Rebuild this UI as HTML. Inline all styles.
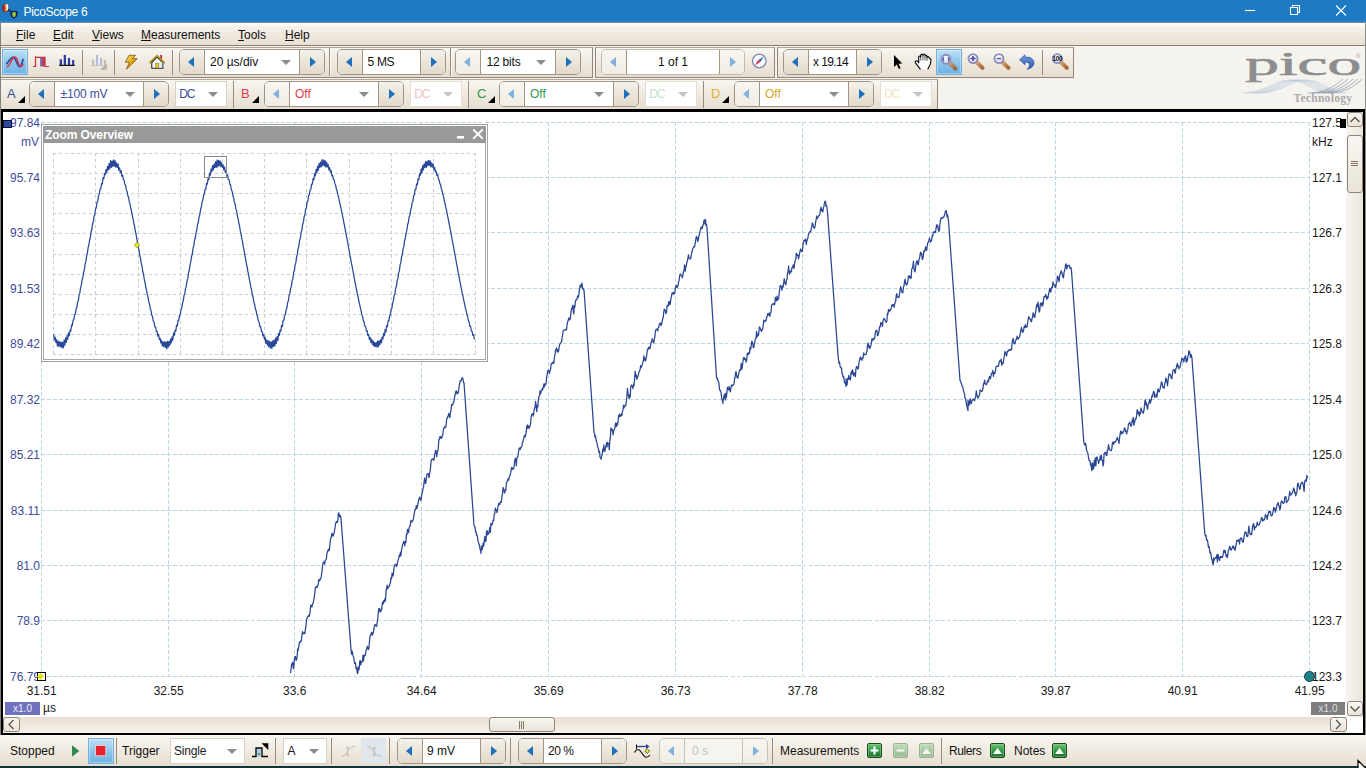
<!DOCTYPE html>
<html lang="en">
<head>
<meta charset="utf-8">
<title>PicoScope 6</title>
<style>
html,body{margin:0;padding:0;overflow:hidden;}
body{width:1366px;height:768px;overflow:hidden;position:relative;background:#ece7dc;
  font-family:"Liberation Sans","DejaVu Sans",sans-serif;font-size:12px;color:#1a1a1a;}
.abs{position:absolute;}
#title{left:0;top:0;width:1366px;height:23px;background:linear-gradient(#1d7ac3 0,#1d7ac3 21px,#5a86ab 22px,#7d909e 23px);}
#title .t{left:23.500px;top:4.600px;color:#fff;font-size:12px;letter-spacing:-.33px;white-space:nowrap;}
#menu{left:0;top:23px;width:1366px;height:22px;background:linear-gradient(#ffffff,#f5f2eb 18%,#efe9df 55%,#e8e0d2);border-bottom:1px solid #8d7d70;}
#menu span{position:absolute;top:5px;font-size:12px;white-space:nowrap;color:#111;}
#menu u{text-decoration:underline;text-underline-offset:1px;}
#tb1{left:0;top:46px;width:1366px;height:32px;background:#f5f3ee;}
#tb2{left:0;top:78px;width:1366px;height:32px;background:#f5f3ee;}
.tbg{position:absolute;top:1px;height:29px;background:linear-gradient(#f8f6f1,#f0ebe1 45%,#e5ddcf);border:1px solid #94857a;border-top-color:#b3a598;box-sizing:content-box;}
.tbg2{position:absolute;top:1px;height:30px;background:linear-gradient(#f8f6f1,#f0ebe1 45%,#e5ddcf);border-top:1px solid #b5a89c;border-right:1px solid #94857a;box-sizing:content-box;}
.sep{position:absolute;width:1px;background:#9a8b7d;}
/* spinner */
.spin{position:absolute;height:24px;border:1px solid #a39586;border-radius:5px;background:#fff;overflow:hidden;box-sizing:content-box;}
.spin .b{position:absolute;top:0;height:24px;width:24px;background:linear-gradient(#f5f2eb,#ebe5d9 50%,#e2dacb);}
.spin .b.l{left:0;border-right:1px solid #a39586;}
.spin .b.r{right:0;border-left:1px solid #a39586;}
.spin .b.dis{background:linear-gradient(#f8f6f1,#f1ede4);}
.spin .txt{position:absolute;top:5px;font-size:12px;white-space:nowrap;}
.tri-l{position:absolute;width:0;height:0;border-top:5px solid transparent;border-bottom:5px solid transparent;border-right:6px solid #1e6fbe;}
.tri-r{position:absolute;width:0;height:0;border-top:5px solid transparent;border-bottom:5px solid transparent;border-left:6px solid #1e6fbe;}
.tri-l.d{border-right-color:#7fb2dc;}
.tri-r.d{border-left-color:#7fb2dc;}
.tri-d{position:absolute;width:0;height:0;border-left:5px solid transparent;border-right:5px solid transparent;border-top:5px solid #8c8c8c;}
.tri-d.d{border-top-color:#c4c4c4;}
.dd{position:absolute;height:24px;border:1px solid #d8d1c6;background:#fff;box-sizing:content-box;}
.dd .txt{position:absolute;top:5px;font-size:12px;white-space:nowrap;}
.chl{position:absolute;font-size:13px;top:8px;}
.chtri{position:absolute;width:0;height:0;border-left:7px solid transparent;border-bottom:7px solid #000;}
/* plot */
#plot{left:1px;top:109px;width:1364px;height:626px;background:#000;}
#plotin{left:2px;top:3px;width:1360px;height:621px;background:#fff;}
.yl{margin-top:.7px;position:absolute;font-size:12px;color:#3e4c99;white-space:nowrap;text-align:right;width:40px;left:0;}
.yr{margin-top:.7px;position:absolute;font-size:12px;color:#1a1a1a;white-space:nowrap;left:1312px;}
.xl{position:absolute;font-size:12px;color:#1a1a1a;white-space:nowrap;width:60px;text-align:center;top:683.500px;margin-left:.7px;}
#bt{left:0;top:735px;width:1366px;height:31px;background:linear-gradient(#f8f6f1,#f1ece2 45%,#e6dfd1);}
#btm{left:0;top:766px;width:1366px;height:2px;background:#14323c;}
.sb{background:linear-gradient(#f8f6f1,#ebe5d8);border:1px solid #8f857b;border-radius:3px;box-sizing:content-box;}
.selb{background:linear-gradient(#bfe0f7,#8fc6ec 50%,#6db2e4);border:1px solid #74aedd;box-shadow:inset 0 0 0 1px rgba(255,255,255,.35);box-sizing:content-box;}
.bl2{position:absolute;top:9px;font-size:12px;white-space:nowrap;color:#111;}
.spin.disab{background:#f6f4ef;border-color:#c9c0b4}
.spin.disab .b{border-color:#c9c0b4}
.bl{position:absolute;top:745px;font-size:12px;white-space:nowrap;color:#111;}
</style>
</head>
<body>
<!-- title bar -->
<div id="title" class="abs"><span class="abs t">PicoScope 6</span></div>
<!-- menu -->
<div id="menu" class="abs">
<span style="left:16px"><u>F</u>ile</span>
<span style="left:53px"><u>E</u>dit</span>
<span style="left:92px"><u>V</u>iews</span>
<span style="left:141px"><u>M</u>easurements</span>
<span style="left:238px"><u>T</u>ools</span>
<span style="left:285px"><u>H</u>elp</span>
</div>
<!-- toolbar row 1 -->
<div id="tb1" class="abs">
<div class="tbg" style="left:-1px;width:592px"></div>
<div class="tbg" style="left:595px;width:178px"></div>
<div class="tbg" style="left:777px;width:295px"></div>
<div class="abs selb" style="left:2px;top:3px;width:24px;height:24px"></div>
<div class="abs selb" style="left:936px;top:3px;width:24px;height:24px"></div>
<div class="sep" style="left:82px;top:4px;height:25px"></div>
<div class="sep" style="left:114px;top:4px;height:25px"></div>
<div class="sep" style="left:172px;top:4px;height:25px"></div>
<div class="sep" style="left:1042px;top:4px;height:25px"></div>
<div class="sep" style="left:329px;top:2px;height:28px"></div><div class="sep" style="left:330px;top:2px;height:28px;background:#fbf9f5"></div>
<div class="sep" style="left:450px;top:2px;height:28px"></div><div class="sep" style="left:451px;top:2px;height:28px;background:#fbf9f5"></div>
<div class="spin" style="left:179px;top:3px;width:144px"><div class="b l" style="width:24px"><i class="tri-l" style="left:8px;top:7px"></i></div><div class="b r" style="width:24px"><i class="tri-r" style="left:10px;top:7px"></i></div><span class="txt" style="left:30px;color:#111">20 µs/div</span><i class="tri-d" style="left:100.500px;top:10px"></i></div>
<div class="spin" style="left:337px;top:3px;width:107px"><div class="b l" style="width:24px"><i class="tri-l" style="left:8px;top:7px"></i></div><div class="b r" style="width:24px"><i class="tri-r" style="left:10px;top:7px"></i></div><span class="txt" style="left:29.500px;color:#111;letter-spacing:-.3px">5 MS</span></div>
<div class="spin" style="left:455px;top:3px;width:124px"><div class="b l dis" style="width:24px"><i class="tri-l d" style="left:8px;top:7px"></i></div><div class="b r" style="width:24px"><i class="tri-r" style="left:10px;top:7px"></i></div><span class="txt" style="left:30.500px;color:#111;letter-spacing:-.2px">12 bits</span><i class="tri-d" style="left:80px;top:10px"></i></div>
<div class="spin" style="left:601px;top:3px;width:142px;border-color:#c4b9ad"><div class="b l dis" style="width:24px"><i class="tri-l d" style="left:8px;top:7px"></i></div><div class="b r dis" style="width:24px"><i class="tri-r d" style="left:10px;top:7px"></i></div><span class="txt" style="left:25px;right:25px;text-align:center;color:#111">1 of 1</span></div>
<div class="spin" style="left:783px;top:3px;width:97px"><div class="b l" style="width:24px"><i class="tri-l" style="left:8px;top:7px"></i></div><div class="b r" style="width:24px"><i class="tri-r" style="left:10px;top:7px"></i></div><span class="txt" style="left:29px;color:#111;letter-spacing:-.6px">x 19.14</span></div>

</div>
<!-- toolbar row 2 -->
<div id="tb2" class="abs">
<div class="tbg2" style="left:0;width:937px"></div>
<span class="chl" style="left:7px;color:#3e4c99">A</span><i class="chtri" style="left:18px;top:18px"></i>
<div class="spin" style="left:29px;top:3px;width:138px"><div class="b l" style="width:24px"><i class="tri-l" style="left:8px;top:7px"></i></div><div class="b r" style="width:24px"><i class="tri-r" style="left:10px;top:7px"></i></div><span class="txt" style="left:30.500px;color:#3e4c99;letter-spacing:-.15px">±100 mV</span><i class="tri-d" style="left:94.500px;top:10px"></i></div>
<div class="dd" style="left:175px;top:3px;width:50px"><span class="txt" style="left:3.300px;letter-spacing:-1.300px;color:#3e4c99">DC</span><i class="tri-d" style="left:32px;top:10px"></i></div>
<div class="sep" style="left:233px;top:3px;height:27px"></div>
<span class="chl" style="left:241px;color:#e03a4a">B</span><i class="chtri" style="left:252px;top:18px"></i>
<div class="spin" style="left:264px;top:3px;width:138px"><div class="b l dis" style="width:24px"><i class="tri-l d" style="left:8px;top:7px"></i></div><div class="b r" style="width:24px"><i class="tri-r" style="left:10px;top:7px"></i></div><span class="txt" style="left:30px;color:#e03a4a">Off</span><i class="tri-d" style="left:94px;top:10px"></i></div>
<div class="dd" style="left:410px;top:3px;width:50px;border-color:#e3ddd3"><span class="txt" style="left:3.300px;letter-spacing:-1.300px;color:#f3c2c8">DC</span><i class="tri-d d" style="left:32px;top:10px"></i></div>
<div class="sep" style="left:468px;top:3px;height:27px"></div>
<span class="chl" style="left:477px;color:#2e9a4e">C</span><i class="chtri" style="left:488px;top:18px"></i>
<div class="spin" style="left:499px;top:3px;width:138px"><div class="b l dis" style="width:24px"><i class="tri-l d" style="left:8px;top:7px"></i></div><div class="b r" style="width:24px"><i class="tri-r" style="left:10px;top:7px"></i></div><span class="txt" style="left:30px;color:#2e9a4e">Off</span><i class="tri-d" style="left:94px;top:10px"></i></div>
<div class="dd" style="left:645px;top:3px;width:50px;border-color:#e3ddd3"><span class="txt" style="left:3.300px;letter-spacing:-1.300px;color:#c4e3cd">DC</span><i class="tri-d d" style="left:32px;top:10px"></i></div>
<div class="sep" style="left:703px;top:3px;height:27px"></div>
<span class="chl" style="left:711px;color:#e0b030">D</span><i class="chtri" style="left:722px;top:18px"></i>
<div class="spin" style="left:734px;top:3px;width:138px"><div class="b l dis" style="width:24px"><i class="tri-l d" style="left:8px;top:7px"></i></div><div class="b r" style="width:24px"><i class="tri-r" style="left:10px;top:7px"></i></div><span class="txt" style="left:30px;color:#d8a82a">Off</span><i class="tri-d" style="left:94px;top:10px"></i></div>
<div class="dd" style="left:880px;top:3px;width:50px;border-color:#e3ddd3"><span class="txt" style="left:3.300px;letter-spacing:-1.300px;color:#f1e3bd">DC</span><i class="tri-d d" style="left:32px;top:10px"></i></div>

</div>
<!-- toolbar icons -->
<svg class="abs" style="left:0;top:0;pointer-events:none" width="1366" height="112" viewBox="0 0 1366 112">
<defs>
<linearGradient id="sqg" x1="0" x2="1" y1="0" y2="0"><stop offset="0" stop-color="#5b8fd8"/><stop offset=".45" stop-color="#b04a78"/><stop offset="1" stop-color="#c8283a"/></linearGradient>
<linearGradient id="blt" x1="0" x2="1" y1="0" y2="1"><stop offset="0" stop-color="#ffe680"/><stop offset=".5" stop-color="#e6a818"/><stop offset="1" stop-color="#9a6408"/></linearGradient>
<linearGradient id="hdl" x1="0" x2="1" y1="0" y2="1"><stop offset="0" stop-color="#e8a56a"/><stop offset="1" stop-color="#a8602c"/></linearGradient>
<radialGradient id="lens" cx=".4" cy=".35" r=".7"><stop offset="0" stop-color="#ffffff"/><stop offset="1" stop-color="#d5e2f5"/></radialGradient>
<linearGradient id="undo" x1="0" x2="0" y1="0" y2="1"><stop offset="0" stop-color="#6f9be0"/><stop offset="1" stop-color="#2a55b0"/></linearGradient>
<g id="mag">
<path d="M3.400 3.400L9.600 9.400" stroke="#8a5428" stroke-width="4" stroke-linecap="round" opacity=".55"/>
<path d="M3.400 3.400L9.400 9.200" stroke="url(#hdl)" stroke-width="3" stroke-linecap="round"/>
<circle cx="0" cy="0" r="4.500" fill="url(#lens)" stroke="#8a8fbc" stroke-width="1.900"/>
</g>
</defs>
<!-- sine -->
<path d="M6.800 63.500C9 62 10.500 57.300 13 57.300C16.300 57.300 16.800 66.800 19.800 66.800C21.600 66.800 22.200 62.500 23 59.500" fill="none" stroke="#2e4f9e" stroke-width="1.800" stroke-linecap="round"/>
<path d="M7.200 66.800C10 66.800 11.800 57 14.800 57C17.800 57 18 66.300 20.800 66.300C21.800 66.300 22.400 65.800 22.900 65" fill="none" stroke="#e03048" stroke-width="1.500" stroke-linecap="round"/>
<!-- square wave -->
<rect x="40" y="57.500" width="5" height="9" fill="url(#sqg)"/>
<path d="M33 66.500H35.500V56.300M35.500 57.300H45V66.500H49" fill="none" stroke="#cf2f42" stroke-width="1.2"/>
<!-- bars -->
<g fill="#2c3f9f"><rect x="59.700" y="59.300" width="2.300" height="6"/><rect x="63.700" y="55" width="2.300" height="10.300"/><rect x="67.900" y="58" width="2.200" height="7.300"/><rect x="72.100" y="60" width="2.100" height="5.300"/></g>
<rect x="59.200" y="64.800" width="15.600" height="1.200" fill="#111"/>
<!-- persistence disabled -->
<g fill="#bdbdc0"><rect x="92" y="59.500" width="2" height="6"/><rect x="100" y="58" width="2" height="7.500"/><rect x="103.800" y="59.800" width="2" height="5.700"/></g>
<rect x="96" y="55" width="2" height="10.500" fill="#b8b8e0"/><rect x="100" y="58" width="2" height="7.500" fill="#b8b8e0" opacity=".6"/>
<rect x="91" y="65" width="15" height="1" fill="#c9c6c0"/>
<path d="M100 69.700H106.800V63.300Z" fill="#b5b2ac"/>
<!-- lightning -->
<path d="M129 55.300L135.600 55.300L132.200 58.700L137.300 58.700L126.500 69.200L129.400 62.200L125.200 62.200Z" fill="url(#blt)" stroke="#7a5208" stroke-width=".8" stroke-linejoin="round"/>
<!-- home -->
<rect x="160.300" y="55" width="1.700" height="4.500" fill="#c41830"/>
<path d="M151.800 62.500V68.300H162.800V62.500L157 57Z" fill="#fff" stroke="#222" stroke-width="1.100"/>
<path d="M158 62H162.300V67.800H158Z" fill="#cfe6ee" opacity=".7"/>
<path d="M149.500 63L157 55.700L164.600 63" fill="none" stroke="#b09a28" stroke-width="1.800" stroke-linejoin="miter"/>
<path d="M149.500 63L157 55.700L164.600 63" fill="none" stroke="#6f6420" stroke-width=".6" stroke-dasharray="1 1"/>
<rect x="155.600" y="63.500" width="3" height="4.500" fill="#e8c838" stroke="#8a7a20" stroke-width=".6"/>
<!-- compass -->
<circle cx="759.300" cy="61" r="6.800" fill="#fff" stroke="#7d86b0" stroke-width="1.300"/>
<path d="M763.800 56.500L760.400 62.100L758.200 59.900Z" fill="#3a66c8"/>
<path d="M754.800 65.500L758.200 59.900L760.400 62.100Z" fill="#e02a4a"/>
<!-- pointer -->
<path d="M894 55V67L896.800 64.500L898.800 69L900.600 68.200L898.600 63.800L902.300 63.500Z" fill="#000"/>
<!-- hand -->
<path d="M920.500 69.300L916 63.600C915 62.300 915 61.300 915.800 60.900C916.800 60.400 917.800 61.300 918.700 62.800V57C918.700 55.600 920.700 55.600 920.700 57V55.600C920.700 54 922.900 54 922.900 55.600V55.100C922.900 53.700 925 53.700 925 55.100V56.200C925 54.900 927 54.900 927 56.200V57.600C927 56.300 929 56.300 929 57.600L929.300 58.300C931 58.300 931 59.500 931 60.500C931 64 929.500 66 927.700 69.300Z" fill="#fff"/>
<path d="M920.500 69.300L916 63.600C915 62.300 915 61.300 915.800 60.900C916.800 60.400 917.800 61.300 918.700 62.800V57C918.700 55.600 920.700 55.600 920.700 57V55.600C920.700 54 922.900 54 922.900 55.600V55.100C922.900 53.700 925 53.700 925 55.100V56.200C925 54.900 927 54.900 927 56.200V57.600C927 56.300 929 56.300 929 57.600L929.300 58.300C931 58.300 931 59.500 931 60.500C931 64 929.500 66 927.700 69.300" fill="none" stroke="#000" stroke-width="1.100" stroke-linejoin="round"/>
<path d="M920.700 57V60.500M922.900 56V60.500M925 56.500V60.500M927 57.500V61" stroke="#000" stroke-width=".65" fill="none"/>
<!-- magnifiers -->
<use href="#mag" x="946" y="59.300"/>
<path d="M944 57.300A3 3 0 0 0 944 61.300M948 57.300A3 3 0 0 1 948 61.300" fill="none" stroke="#3a50a8" stroke-width="1.100"/>
<use href="#mag" x="973" y="58.600"/>
<path d="M970.500 58.600H975.500M973 56.100V61.100" stroke="#4a3aa0" stroke-width="1.500"/>
<use href="#mag" x="999" y="58.600"/>
<path d="M996.800 58.600H1001.200" stroke="#7a4aa8" stroke-width="1.500"/>
<use href="#mag" x="1057.300" y="58.600"/>
<text x="1057.300" y="60.900" font-family="'Liberation Sans',sans-serif" font-size="6.300" font-weight="bold" text-anchor="middle" fill="#111" letter-spacing="-.3">100</text>
<!-- undo -->
<path d="M1019.500 59.800L1025 54.800V57.300C1030.500 56.300 1034.300 59.500 1034 63.500C1033.700 66.500 1030.500 68.600 1027 69.300C1029.500 67.300 1030 64.800 1028.800 63.300C1027.900 62.300 1026.500 62 1025 62.300V64.800Z" fill="url(#undo)" stroke="#2448a0" stroke-width=".6" stroke-linejoin="round"/>
</svg>
<!-- logo, app icon, window buttons -->
<div class="abs" style="left:1245px;top:42.300px;width:60px;height:44px;font-family:'Liberation Serif','DejaVu Serif',serif;font-weight:normal;-webkit-text-stroke:.5px #8e8e8e;font-size:33px;line-height:44px;color:#8e8e8e;transform-origin:0 0;transform:scaleX(2.07);white-space:nowrap;letter-spacing:-.2px">pico</div>
<div class="abs" style="left:1356px;top:53px;font-size:6px;color:#9a9a9a">®</div>
<div class="abs" style="left:1293.500px;top:92.300px;font-family:'Liberation Serif','DejaVu Serif',serif;font-weight:bold;font-size:11.5px;color:#a9a9a9;white-space:nowrap;letter-spacing:.3px">Technology</div>
<svg class="abs" style="left:0;top:0;pointer-events:none" width="1366" height="112" viewBox="0 0 1366 112">
<g fill="none" stroke-width=".7">
<g stroke="#b7c9de">
<path d="M1243 93C1265 93 1275 80 1290 80S1315 93 1330 93"/>
<path d="M1247 93C1269 93 1279 80 1294 80S1319 93 1334 93"/>
<path d="M1251 93C1273 93 1283 80 1298 80S1323 93 1338 93"/>
<path d="M1255 93C1277 93 1287 80 1302 80S1327 93 1342 93"/>
<path d="M1259 93C1281 93 1291 80 1306 80S1331 93 1346 93"/>
</g>
<g stroke="#8a93a3">
<path d="M1308 93C1325 93 1335 86 1343 79"/>
<path d="M1313 93C1330 93 1340 86 1348 79"/>
<path d="M1318 93C1335 93 1345 86 1353 79"/>
<path d="M1323 93C1340 93 1350 86 1358 79"/>
<path d="M1328 93C1345 93 1355 86 1362 79"/>
</g>
</g>
<!-- app icon -->
<ellipse cx="5.500" cy="8" rx="3.300" ry="4.300" fill="#5a1c1c"/><ellipse cx="5.800" cy="7.800" rx="2.300" ry="3.800" fill="#e8b040"/><ellipse cx="4.300" cy="8.300" rx="1.300" ry="3.300" fill="#c03028"/><ellipse cx="7.300" cy="7.300" rx="1.100" ry="3.300" fill="#f8f8e8"/>
<path d="M8 9.500L12 12.500" stroke="#1c2c6a" stroke-width="1.600"/>
<path d="M10.500 11H17.500V14.500C17.500 16.500 15.500 18 14 18.500C12.500 18 10.500 16.500 10.500 14.500Z" fill="#16245c"/>
<path d="M12 12.300H16V14.500C16 15.800 15 16.800 14 17.200C13 16.800 12 15.800 12 14.500Z" fill="#58a838"/>
<rect x="13.500" y="12.300" width="1.300" height="4.500" fill="#e8d838"/>
<!-- window buttons -->
<g stroke="#fff" stroke-width="1.100" fill="none">
<path d="M1245 10.500H1255"/>
<path d="M1290.500 7.500H1297.500V14.500H1290.500Z"/>
<path d="M1292.500 7.500V5.500H1299.500V12.500H1297.500"/>
<path d="M1336 5.500L1346 15.500M1346 5.500L1336 15.500"/>
</g>
</svg>

<div class="abs" style="left:0;top:23px;width:1px;height:743px;background:#7f827c"></div><div class="abs" style="left:1365px;top:23px;width:1px;height:743px;background:#8a8c86"></div>
<!-- plot -->
<div id="plot" class="abs"><div id="plotin" class="abs"></div></div>
<svg class="abs" style="left:0;top:0" width="1366" height="768" viewBox="0 0 1366 768">
<g stroke="#bdd6e2" stroke-width="1" stroke-dasharray="3.500 2.500" fill="none" shape-rendering="crispEdges">
<!-- horizontal grid -->
<path d="M41 122.5H1309M41 177.5H1309M41 232.5H1309M41 288.5H1309M41 343.5H1309M41 399.5H1309M41 454.5H1309M41 510.5H1309M41 565.5H1309M41 620.5H1309M41 676.5H1309"/>
<!-- vertical grid -->
<path d="M41.5 122V676M168.5 122V676M294.5 122V676M421.5 122V676M548.5 122V676M675.5 122V676M802.5 122V676M929.5 122V676M1055.5 122V676M1182.5 122V676M1309.5 122V676"/>
</g>
<path d="M290.5 673.2 L291.1 669.0 L291.6 664.4 L292.2 663.4 L292.7 662.3 L293.3 668.6 L293.8 667.4 L294.4 658.3 L294.9 657.3 L295.5 656.4 L296.0 660.3 L296.6 659.7 L297.1 657.4 L297.7 648.9 L298.2 650.3 L298.8 646.1 L299.3 643.3 L299.9 641.8 L300.4 641.2 L301.0 642.0 L301.5 639.3 L302.1 634.2 L302.6 631.6 L303.2 633.5 L303.7 633.8 L304.3 632.7 L304.8 633.6 L305.4 629.2 L305.9 627.1 L306.5 619.4 L307.0 618.5 L307.6 617.0 L308.1 616.1 L308.7 615.5 L309.2 616.4 L309.8 614.0 L310.3 609.2 L310.9 604.9 L311.4 606.1 L312.0 607.0 L312.5 604.0 L313.1 603.4 L313.6 600.9 L314.2 597.5 L314.8 593.0 L315.3 588.1 L315.9 586.9 L316.4 586.7 L317.0 587.5 L317.5 586.0 L318.1 585.2 L318.6 579.8 L319.2 581.0 L319.7 579.2 L320.3 579.8 L320.8 578.7 L321.4 575.5 L321.9 572.1 L322.5 566.2 L323.0 563.3 L323.6 562.0 L324.1 561.8 L324.7 564.2 L325.2 560.3 L325.8 559.9 L326.3 559.3 L326.9 553.9 L327.4 551.6 L328.0 550.7 L328.5 549.1 L329.1 550.8 L329.6 548.1 L330.2 541.9 L330.7 538.1 L331.3 537.4 L331.8 533.7 L332.4 533.4 L332.9 536.1 L333.5 534.9 L334.0 533.4 L334.6 530.2 L335.1 527.4 L335.7 522.6 L336.2 522.7 L336.8 521.5 L337.3 522.5 L337.9 519.8 L338.4 513.1 L339.0 513.1 L339.5 516.7 L340.0 517.0 L340.5 515.6 L341.0 518.5 L341.5 525.1 L342.0 531.6 L342.5 538.2 L343.0 544.7 L343.5 551.3 L344.0 557.8 L344.5 564.4 L345.0 570.9 L345.5 577.5 L346.0 584.0 L346.5 590.6 L347.0 597.1 L347.5 603.7 L348.0 610.2 L348.5 616.8 L349.0 623.3 L349.5 629.9 L350.0 636.4 L350.5 643.0 L351.0 649.5 L351.5 654.2 L352.0 650.9 L352.5 652.2 L353.0 655.6 L353.5 656.9 L354.0 659.3 L354.5 663.4 L355.0 663.5 L355.5 662.7 L356.0 668.5 L356.5 667.8 L357.0 671.0 L357.5 673.6 L358.0 672.3 L358.0 666.9 L358.6 669.8 L359.1 669.4 L359.7 662.0 L360.2 660.3 L360.8 665.0 L361.3 662.0 L361.9 661.4 L362.4 661.9 L363.0 655.0 L363.5 660.8 L364.1 656.0 L364.6 655.1 L365.2 655.7 L365.7 652.7 L366.3 649.8 L366.8 648.8 L367.4 646.2 L367.9 648.7 L368.5 649.5 L369.0 647.1 L369.6 640.2 L370.1 635.8 L370.7 635.2 L371.2 633.3 L371.8 632.2 L372.3 635.2 L372.9 633.5 L373.4 632.6 L374.0 628.3 L374.5 625.6 L375.1 624.5 L375.6 625.0 L376.2 626.3 L376.7 626.2 L377.3 621.5 L377.8 618.3 L378.4 611.2 L378.9 608.6 L379.5 608.3 L380.0 612.2 L380.6 609.9 L381.1 611.0 L381.7 609.3 L382.2 603.4 L382.8 602.0 L383.3 603.9 L383.9 600.4 L384.4 601.8 L385.0 598.6 L385.5 600.9 L386.1 589.9 L386.6 589.1 L387.2 585.2 L387.7 588.8 L388.3 586.9 L388.8 586.8 L389.4 586.3 L389.9 584.0 L390.5 582.5 L391.0 577.5 L391.6 578.7 L392.1 573.0 L392.7 575.8 L393.2 575.9 L393.8 569.8 L394.3 565.7 L394.9 564.8 L395.4 564.6 L396.0 564.4 L396.5 566.6 L397.1 564.5 L397.6 562.1 L398.2 559.7 L398.7 558.4 L399.3 555.2 L399.8 556.6 L400.4 552.4 L400.9 555.6 L401.5 549.8 L402.0 547.9 L402.6 544.5 L403.1 543.7 L403.7 541.3 L404.2 542.2 L404.8 545.8 L405.3 541.6 L405.9 542.4 L406.4 534.2 L407.0 534.7 L407.5 529.3 L408.1 530.3 L408.6 532.7 L409.2 527.4 L409.7 526.6 L410.3 525.4 L410.8 520.7 L411.4 521.5 L411.9 522.1 L412.5 520.2 L413.0 520.3 L413.6 517.8 L414.1 514.4 L414.7 511.3 L415.2 509.2 L415.8 509.3 L416.3 505.6 L416.9 508.3 L417.4 506.9 L418.0 503.1 L418.5 500.5 L419.1 499.1 L419.6 497.1 L420.2 498.7 L420.7 500.5 L421.3 498.4 L421.8 493.2 L422.4 492.5 L422.9 489.0 L423.5 487.4 L424.0 483.0 L424.6 478.2 L425.1 481.7 L425.7 483.6 L426.2 479.9 L426.8 474.9 L427.3 473.8 L427.9 473.6 L428.4 474.0 L429.0 477.6 L429.5 473.6 L430.1 471.4 L430.6 466.7 L431.2 460.5 L431.7 459.3 L432.3 459.5 L432.8 458.8 L433.4 460.0 L433.9 460.2 L434.5 455.7 L435.0 453.6 L435.6 450.4 L436.1 450.5 L436.7 456.8 L437.2 451.8 L437.8 451.8 L438.3 447.5 L438.9 439.5 L439.4 439.3 L440.0 436.4 L440.5 438.2 L441.1 436.8 L441.6 438.3 L442.2 435.9 L442.7 435.3 L443.3 430.0 L443.8 428.5 L444.4 426.9 L444.9 427.9 L445.5 427.2 L446.0 426.7 L446.6 419.0 L447.1 418.6 L447.7 416.4 L448.2 415.8 L448.8 413.4 L449.3 416.8 L449.9 417.6 L450.4 412.3 L451.0 411.0 L451.5 404.7 L452.1 404.9 L452.6 405.2 L453.2 402.9 L453.7 403.0 L454.3 398.7 L454.8 396.3 L455.4 393.3 L455.9 391.2 L456.5 390.9 L457.0 394.0 L457.6 392.7 L458.1 393.2 L458.7 390.0 L459.2 385.7 L459.8 383.0 L460.3 380.7 L460.9 380.9 L461.4 379.7 L462.0 378.3 L462.5 377.8 L463.0 379.0 L463.5 382.6 L464.0 382.9 L464.5 390.0 L465.0 397.2 L465.5 404.3 L466.0 411.4 L466.5 418.5 L467.0 425.6 L467.5 432.8 L468.0 439.9 L468.5 447.0 L469.0 454.1 L469.5 461.3 L470.0 468.4 L470.5 475.5 L471.0 482.6 L471.5 489.7 L472.0 496.9 L472.5 504.0 L473.0 511.1 L473.5 518.2 L474.0 525.4 L474.5 526.8 L475.0 526.8 L475.5 531.8 L476.0 531.6 L476.5 535.2 L477.0 534.9 L477.5 537.1 L478.0 541.2 L478.5 542.1 L479.0 544.4 L479.5 545.4 L480.0 548.9 L480.5 550.1 L481.0 553.3 L481.0 551.5 L481.6 545.9 L482.1 549.9 L482.7 546.8 L483.2 543.0 L483.8 546.0 L484.3 540.3 L484.9 536.3 L485.4 541.5 L486.0 541.0 L486.5 531.3 L487.1 530.5 L487.6 534.9 L488.2 532.6 L488.7 533.8 L489.3 530.6 L489.8 527.5 L490.4 532.3 L490.9 523.3 L491.5 525.5 L492.0 524.8 L492.6 522.8 L493.1 520.1 L493.7 520.5 L494.2 514.3 L494.8 513.7 L495.3 508.2 L495.9 510.2 L496.5 510.2 L497.0 512.6 L497.6 508.7 L498.1 506.4 L498.7 503.3 L499.2 504.0 L499.8 504.7 L500.3 501.7 L500.9 502.2 L501.4 502.1 L502.0 495.8 L502.5 494.3 L503.1 487.5 L503.6 488.4 L504.2 491.5 L504.7 493.0 L505.3 489.8 L505.8 490.4 L506.4 483.3 L506.9 482.0 L507.5 480.4 L508.0 478.8 L508.6 480.4 L509.1 478.2 L509.7 475.7 L510.3 474.5 L510.8 472.2 L511.4 468.0 L511.9 467.3 L512.5 469.3 L513.0 469.1 L513.6 468.8 L514.1 466.4 L514.7 461.1 L515.2 458.4 L515.8 458.5 L516.3 465.8 L516.9 457.8 L517.4 457.5 L518.0 456.0 L518.5 451.8 L519.1 448.5 L519.6 448.0 L520.2 449.5 L520.7 447.4 L521.3 447.1 L521.8 446.6 L522.4 442.5 L522.9 442.0 L523.5 439.1 L524.0 436.9 L524.6 435.4 L525.2 437.1 L525.7 434.8 L526.3 431.2 L526.8 426.3 L527.4 425.0 L527.9 428.3 L528.5 425.9 L529.0 428.2 L529.6 426.6 L530.1 426.2 L530.7 422.3 L531.2 416.4 L531.8 414.1 L532.3 414.5 L532.9 413.7 L533.4 416.2 L534.0 410.5 L534.5 408.3 L535.1 407.3 L535.6 401.4 L536.2 407.1 L536.7 411.7 L537.3 405.2 L537.8 407.0 L538.4 400.1 L539.0 396.3 L539.5 395.6 L540.1 390.7 L540.6 393.9 L541.2 391.3 L541.7 390.7 L542.3 388.5 L542.8 389.5 L543.4 386.7 L543.9 383.9 L544.5 387.0 L545.0 383.8 L545.6 384.7 L546.1 383.3 L546.7 377.1 L547.2 374.0 L547.8 370.8 L548.3 370.2 L548.9 371.0 L549.4 373.7 L550.0 370.7 L550.5 370.0 L551.1 363.9 L551.6 363.6 L552.2 362.9 L552.7 363.6 L553.3 361.8 L553.9 363.2 L554.4 357.5 L555.0 354.5 L555.5 349.8 L556.1 349.7 L556.6 348.0 L557.2 352.2 L557.7 349.9 L558.3 351.9 L558.8 349.9 L559.4 345.3 L559.9 344.1 L560.5 343.4 L561.0 342.6 L561.6 341.6 L562.1 337.6 L562.7 334.5 L563.2 330.4 L563.8 330.4 L564.3 329.9 L564.9 329.8 L565.4 329.5 L566.0 330.1 L566.5 329.7 L567.1 324.5 L567.7 321.8 L568.2 320.4 L568.8 317.8 L569.3 319.9 L569.9 319.7 L570.4 318.1 L571.0 312.4 L571.5 308.7 L572.1 308.7 L572.6 305.4 L573.2 309.8 L573.7 313.9 L574.3 305.3 L574.8 307.5 L575.4 301.5 L575.9 299.8 L576.5 300.0 L577.0 299.2 L577.6 295.9 L578.1 297.7 L578.7 295.5 L579.2 291.7 L579.8 287.4 L580.3 285.0 L580.9 287.0 L581.4 286.4 L582.0 283.0 L582.5 288.5 L583.0 287.9 L583.5 290.1 L584.0 289.9 L584.5 297.0 L585.0 304.2 L585.5 311.3 L586.0 318.4 L586.5 325.5 L587.0 332.6 L587.5 339.8 L588.0 346.9 L588.5 354.0 L589.0 361.1 L589.5 368.3 L590.0 375.4 L590.5 382.5 L591.0 389.6 L591.5 396.7 L592.0 403.9 L592.5 411.0 L593.0 418.1 L593.5 425.2 L594.0 432.4 L594.5 433.7 L595.0 437.2 L595.5 435.5 L596.0 439.3 L596.5 441.7 L597.0 442.5 L597.5 446.8 L598.0 447.3 L598.5 449.4 L599.0 452.7 L599.5 451.3 L600.0 457.2 L600.5 457.6 L601.0 458.5 L601.0 459.4 L601.6 456.3 L602.1 455.0 L602.7 449.4 L603.2 451.5 L603.8 445.0 L604.3 449.8 L604.9 451.5 L605.4 448.1 L606.0 445.9 L606.5 442.8 L607.1 446.8 L607.6 442.2 L608.2 443.2 L608.7 443.5 L609.3 449.8 L609.8 441.2 L610.4 436.9 L610.9 427.8 L611.5 430.7 L612.0 429.2 L612.6 430.0 L613.1 434.8 L613.7 430.7 L614.2 429.7 L614.8 428.3 L615.3 424.3 L615.9 422.8 L616.4 426.6 L617.0 423.3 L617.5 425.0 L618.1 421.7 L618.6 415.4 L619.2 417.0 L619.7 414.2 L620.3 416.2 L620.8 416.3 L621.4 414.0 L621.9 415.4 L622.5 411.0 L623.0 409.9 L623.6 405.1 L624.1 407.9 L624.7 405.9 L625.2 405.5 L625.8 405.8 L626.3 402.0 L626.9 396.7 L627.4 388.3 L628.0 393.3 L628.5 396.0 L629.1 398.7 L629.6 394.8 L630.2 396.9 L630.7 387.4 L631.3 385.2 L631.8 385.4 L632.4 386.4 L632.9 388.6 L633.5 384.5 L634.0 385.9 L634.6 378.9 L635.1 371.2 L635.7 376.6 L636.2 374.7 L636.8 379.2 L637.3 378.3 L637.9 376.3 L638.4 374.9 L639.0 371.7 L639.5 371.4 L640.1 369.4 L640.6 365.7 L641.2 367.6 L641.7 366.3 L642.3 364.7 L642.8 362.9 L643.4 360.2 L643.9 355.8 L644.5 360.1 L645.0 358.3 L645.6 361.0 L646.1 358.1 L646.7 355.5 L647.2 351.3 L647.8 348.6 L648.3 349.4 L648.9 347.0 L649.4 347.0 L650.0 348.7 L650.5 346.0 L651.1 342.1 L651.6 342.3 L652.2 338.7 L652.7 341.1 L653.3 341.1 L653.8 342.9 L654.4 338.2 L654.9 336.8 L655.5 330.2 L656.0 330.0 L656.6 329.2 L657.1 329.2 L657.7 331.0 L658.2 327.9 L658.8 327.3 L659.3 324.0 L659.9 323.5 L660.4 323.0 L661.0 325.6 L661.5 324.5 L662.1 321.8 L662.6 318.7 L663.2 317.9 L663.7 312.9 L664.3 309.0 L664.8 309.9 L665.4 310.7 L665.9 313.7 L666.5 312.3 L667.0 305.9 L667.6 305.3 L668.1 306.3 L668.7 302.2 L669.2 301.4 L669.8 304.7 L670.3 304.2 L670.9 298.3 L671.4 297.1 L672.0 293.4 L672.5 292.5 L673.1 292.4 L673.6 294.3 L674.2 293.4 L674.7 293.1 L675.3 288.3 L675.8 286.7 L676.4 285.3 L676.9 287.7 L677.5 286.9 L678.0 285.0 L678.6 282.2 L679.1 280.4 L679.7 275.6 L680.2 273.8 L680.8 274.5 L681.3 275.5 L681.9 276.1 L682.4 277.6 L683.0 274.3 L683.5 271.6 L684.1 270.0 L684.6 264.8 L685.2 271.2 L685.7 267.5 L686.3 266.1 L686.8 262.1 L687.4 261.3 L687.9 258.4 L688.5 254.9 L689.0 257.7 L689.6 258.7 L690.1 258.9 L690.7 258.6 L691.2 255.1 L691.8 252.4 L692.3 250.7 L692.9 248.2 L693.4 247.5 L694.0 246.3 L694.5 246.9 L695.1 244.0 L695.6 241.2 L696.2 236.9 L696.7 236.4 L697.3 238.9 L697.8 241.6 L698.4 239.2 L698.9 236.4 L699.5 234.1 L700.0 231.4 L700.6 229.3 L701.1 227.0 L701.7 227.6 L702.2 228.6 L702.8 225.3 L703.3 225.2 L703.9 220.6 L704.4 219.8 L705.0 223.9 L705.5 219.6 L706.0 225.4 L706.5 224.3 L707.0 227.8 L707.5 235.6 L708.0 243.5 L708.5 251.4 L709.0 259.2 L709.5 267.1 L710.0 275.0 L710.5 282.8 L711.0 290.7 L711.5 298.6 L712.0 306.4 L712.5 314.3 L713.0 322.2 L713.5 330.0 L714.0 337.9 L714.5 345.7 L715.0 353.6 L715.5 361.5 L716.0 369.3 L716.5 377.2 L717.0 378.9 L717.5 378.3 L718.0 381.1 L718.5 382.0 L719.0 383.6 L719.5 389.2 L720.0 390.6 L720.5 390.4 L721.0 392.6 L721.5 396.1 L722.0 400.1 L722.5 400.7 L723.0 403.3 L723.0 400.7 L723.6 398.8 L724.1 395.3 L724.7 394.2 L725.2 400.0 L725.8 393.1 L726.3 397.7 L726.9 392.8 L727.4 387.4 L728.0 389.4 L728.5 389.9 L729.1 386.5 L729.6 388.9 L730.2 391.9 L730.7 389.5 L731.3 385.8 L731.8 384.9 L732.4 385.9 L732.9 385.2 L733.5 384.7 L734.0 384.0 L734.6 377.7 L735.1 377.8 L735.7 372.0 L736.2 371.8 L736.8 377.2 L737.3 377.3 L737.9 378.3 L738.4 375.1 L739.0 372.7 L739.5 370.4 L740.1 369.6 L740.6 370.3 L741.2 363.3 L741.7 369.2 L742.3 367.3 L742.8 362.5 L743.4 358.3 L744.0 357.2 L744.5 359.4 L745.1 358.6 L745.6 359.6 L746.2 362.2 L746.7 360.2 L747.3 353.2 L747.8 353.6 L748.4 354.6 L748.9 352.4 L749.5 353.4 L750.0 347.4 L750.6 349.3 L751.1 346.8 L751.7 341.3 L752.2 341.7 L752.8 343.9 L753.3 347.7 L753.9 347.3 L754.4 343.1 L755.0 340.7 L755.5 338.3 L756.1 338.1 L756.6 331.4 L757.2 337.0 L757.7 334.3 L758.3 335.5 L758.8 333.2 L759.4 326.9 L759.9 327.7 L760.5 328.5 L761.0 330.7 L761.6 331.4 L762.1 330.0 L762.7 329.2 L763.2 325.6 L763.8 320.2 L764.4 321.6 L764.9 320.9 L765.5 320.4 L766.0 321.1 L766.6 317.1 L767.1 316.9 L767.7 313.7 L768.2 313.8 L768.8 315.2 L769.3 313.0 L769.9 316.3 L770.4 312.9 L771.0 312.3 L771.5 305.2 L772.1 305.1 L772.6 304.0 L773.2 303.4 L773.7 303.9 L774.3 304.9 L774.8 303.9 L775.4 297.3 L775.9 298.2 L776.5 300.9 L777.0 296.1 L777.6 300.2 L778.1 299.2 L778.7 298.3 L779.2 292.7 L779.8 287.7 L780.3 285.4 L780.9 286.0 L781.4 287.2 L782.0 290.3 L782.5 286.1 L783.1 287.1 L783.6 283.7 L784.2 278.7 L784.8 283.1 L785.3 282.8 L785.9 284.8 L786.4 280.2 L787.0 279.4 L787.5 273.5 L788.1 271.1 L788.6 266.0 L789.2 272.6 L789.7 274.3 L790.3 271.2 L790.8 271.7 L791.4 271.8 L791.9 267.6 L792.5 267.8 L793.0 265.3 L793.6 264.9 L794.1 268.5 L794.7 262.6 L795.2 260.7 L795.8 259.4 L796.3 253.1 L796.9 255.5 L797.4 254.7 L798.0 255.3 L798.5 258.9 L799.1 256.1 L799.6 253.5 L800.2 250.5 L800.7 249.0 L801.3 250.9 L801.8 251.7 L802.4 251.3 L802.9 245.8 L803.5 242.0 L804.0 240.1 L804.6 240.2 L805.2 241.3 L805.7 239.0 L806.3 244.6 L806.8 241.1 L807.4 239.5 L807.9 237.9 L808.5 234.0 L809.0 232.8 L809.6 232.8 L810.1 231.3 L810.7 231.6 L811.2 229.1 L811.8 226.7 L812.3 222.8 L812.9 224.2 L813.4 226.5 L814.0 227.9 L814.5 228.4 L815.1 225.9 L815.6 222.1 L816.2 219.3 L816.7 215.8 L817.3 218.5 L817.8 217.3 L818.4 216.9 L818.9 215.5 L819.5 215.3 L820.0 212.9 L820.6 208.9 L821.1 207.2 L821.7 210.9 L822.2 209.6 L822.8 212.0 L823.3 208.5 L823.9 206.4 L824.4 203.7 L825.0 201.2 L825.5 201.3 L826.0 206.1 L826.5 205.1 L827.0 207.8 L827.5 212.1 L828.0 218.9 L828.5 225.8 L829.0 232.6 L829.5 239.4 L830.0 246.2 L830.5 253.0 L831.0 259.8 L831.5 266.7 L832.0 273.5 L832.5 280.3 L833.0 287.1 L833.5 293.9 L834.0 300.7 L834.5 307.5 L835.0 314.4 L835.5 321.2 L836.0 328.0 L836.5 334.8 L837.0 341.6 L837.5 348.4 L838.0 355.2 L838.5 359.4 L839.0 363.4 L839.5 362.1 L840.0 365.7 L840.5 367.7 L841.0 368.0 L841.5 367.8 L842.0 373.6 L842.5 373.6 L843.0 377.2 L843.5 376.5 L844.0 378.0 L844.5 382.8 L845.0 382.6 L845.5 383.6 L846.0 386.4 L846.0 378.7 L846.6 385.1 L847.1 384.7 L847.7 378.5 L848.2 379.2 L848.8 375.4 L849.3 379.3 L849.9 377.9 L850.4 379.8 L851.0 373.3 L851.5 371.2 L852.1 374.0 L852.6 369.8 L853.2 372.8 L853.7 375.8 L854.3 373.9 L854.8 372.9 L855.4 376.7 L855.9 369.1 L856.5 366.4 L857.0 367.0 L857.6 368.8 L858.2 368.9 L858.7 365.3 L859.3 360.7 L859.8 359.2 L860.4 356.8 L860.9 359.1 L861.5 358.4 L862.0 360.4 L862.6 357.6 L863.1 358.0 L863.7 352.9 L864.2 354.7 L864.8 354.7 L865.3 354.6 L865.9 354.7 L866.4 352.5 L867.0 351.4 L867.5 345.5 L868.1 343.0 L868.7 347.1 L869.2 345.9 L869.8 348.7 L870.3 346.9 L870.9 345.6 L871.4 342.4 L872.0 338.7 L872.5 340.7 L873.1 339.6 L873.6 338.4 L874.2 339.0 L874.7 337.7 L875.3 333.5 L875.8 330.6 L876.4 330.6 L876.9 330.1 L877.5 335.7 L878.0 335.4 L878.6 333.2 L879.1 330.4 L879.7 326.3 L880.3 326.8 L880.8 322.3 L881.4 324.4 L881.9 323.4 L882.5 326.5 L883.0 320.9 L883.6 319.1 L884.1 318.5 L884.7 319.3 L885.2 320.4 L885.8 322.0 L886.3 322.3 L886.9 320.9 L887.4 313.4 L888.0 314.0 L888.5 309.5 L889.1 311.3 L889.6 309.9 L890.2 310.8 L890.8 309.2 L891.3 308.2 L891.9 304.8 L892.4 305.9 L893.0 304.5 L893.5 305.2 L894.1 307.3 L894.6 304.4 L895.2 302.5 L895.7 301.0 L896.3 295.0 L896.8 293.6 L897.4 297.2 L897.9 296.8 L898.5 297.6 L899.0 297.4 L899.6 293.4 L900.1 289.5 L900.7 286.6 L901.2 289.5 L901.8 291.9 L902.4 292.8 L902.9 292.7 L903.5 287.0 L904.0 285.7 L904.6 281.2 L905.1 279.2 L905.7 284.0 L906.2 283.4 L906.8 285.2 L907.3 283.4 L907.9 281.2 L908.4 275.9 L909.0 276.8 L909.5 275.9 L910.1 278.5 L910.6 276.7 L911.2 278.0 L911.7 269.1 L912.3 268.3 L912.9 266.1 L913.4 261.2 L914.0 269.1 L914.5 270.8 L915.1 271.9 L915.6 267.3 L916.2 263.4 L916.7 261.2 L917.3 261.0 L917.8 264.3 L918.4 264.5 L918.9 259.8 L919.5 258.4 L920.0 255.1 L920.6 252.2 L921.1 254.5 L921.7 253.4 L922.2 259.4 L922.8 258.8 L923.3 256.1 L923.9 250.9 L924.5 251.5 L925.0 249.9 L925.6 246.9 L926.1 250.3 L926.7 250.2 L927.2 246.1 L927.8 242.5 L928.3 242.4 L928.9 240.4 L929.4 238.1 L930.0 239.9 L930.5 242.0 L931.1 241.3 L931.6 240.4 L932.2 235.7 L932.7 236.1 L933.3 232.0 L933.8 232.2 L934.4 231.6 L935.0 232.6 L935.5 232.5 L936.1 227.8 L936.6 224.8 L937.2 227.1 L937.7 225.1 L938.3 229.4 L938.8 231.4 L939.4 230.4 L939.9 224.3 L940.5 220.3 L941.0 218.1 L941.6 218.6 L942.1 217.5 L942.7 218.0 L943.2 217.1 L943.8 217.1 L944.3 215.6 L944.9 213.2 L945.4 211.5 L946.0 210.5 L946.5 212.0 L947.0 216.9 L947.5 214.6 L948.0 217.5 L948.5 221.1 L949.0 228.0 L949.5 234.9 L950.0 241.9 L950.5 248.8 L951.0 255.7 L951.5 262.7 L952.0 269.6 L952.5 276.5 L953.0 283.4 L953.5 290.4 L954.0 297.3 L954.5 304.2 L955.0 311.2 L955.5 318.1 L956.0 325.0 L956.5 331.9 L957.0 338.9 L957.5 345.8 L958.0 352.7 L958.5 359.7 L959.0 366.6 L959.5 373.5 L960.0 380.5 L960.5 380.5 L961.0 383.2 L961.5 383.3 L962.0 385.8 L962.5 386.9 L963.0 387.8 L963.5 390.8 L964.0 392.4 L964.5 393.8 L965.0 398.4 L965.5 398.4 L966.0 400.9 L966.5 405.0 L967.0 406.3 L967.5 408.8 L968.0 410.6 L968.0 400.3 L968.6 402.7 L969.1 405.4 L969.7 401.4 L970.2 398.6 L970.8 403.6 L971.3 403.4 L971.9 400.8 L972.4 400.3 L973.0 399.2 L973.5 399.1 L974.1 400.3 L974.6 400.7 L975.2 398.2 L975.7 396.8 L976.3 390.9 L976.8 394.6 L977.4 397.0 L977.9 398.0 L978.5 397.7 L979.0 395.7 L979.6 394.9 L980.1 389.9 L980.7 390.6 L981.2 390.7 L981.8 391.5 L982.3 390.9 L982.9 389.2 L983.5 383.6 L984.0 383.8 L984.6 380.2 L985.1 384.0 L985.7 383.8 L986.2 384.8 L986.8 383.9 L987.3 381.7 L987.9 380.3 L988.4 381.9 L989.0 378.1 L989.5 376.4 L990.1 378.8 L990.6 378.2 L991.2 375.0 L991.7 373.3 L992.3 372.8 L992.8 370.4 L993.4 376.3 L993.9 372.5 L994.5 373.7 L995.0 373.4 L995.6 369.8 L996.1 366.7 L996.7 366.3 L997.3 366.2 L997.8 366.3 L998.4 366.3 L998.9 364.0 L999.5 360.9 L1000.0 361.3 L1000.6 361.5 L1001.1 359.2 L1001.7 365.1 L1002.2 362.6 L1002.8 363.8 L1003.3 362.7 L1003.9 358.5 L1004.4 355.3 L1005.0 351.5 L1005.5 352.5 L1006.1 354.5 L1006.6 356.0 L1007.2 351.4 L1007.7 351.8 L1008.3 350.1 L1008.8 350.6 L1009.4 349.6 L1009.9 350.3 L1010.5 350.1 L1011.0 349.1 L1011.6 349.6 L1012.2 341.8 L1012.7 340.0 L1013.3 338.5 L1013.8 343.3 L1014.4 342.7 L1014.9 343.9 L1015.5 341.4 L1016.0 339.3 L1016.6 339.3 L1017.1 336.1 L1017.7 338.4 L1018.2 339.1 L1018.8 337.8 L1019.3 337.3 L1019.9 335.8 L1020.4 332.7 L1021.0 329.4 L1021.5 327.3 L1022.1 331.2 L1022.6 332.4 L1023.2 331.8 L1023.7 329.3 L1024.3 326.5 L1024.8 327.4 L1025.4 324.7 L1026.0 327.4 L1026.5 327.2 L1027.1 326.6 L1027.6 323.0 L1028.2 319.4 L1028.7 316.7 L1029.3 317.8 L1029.8 319.0 L1030.4 319.0 L1030.9 321.5 L1031.5 321.6 L1032.0 318.7 L1032.6 316.7 L1033.1 312.9 L1033.7 314.5 L1034.2 317.2 L1034.8 317.4 L1035.3 313.7 L1035.9 311.2 L1036.4 306.4 L1037.0 304.1 L1037.5 306.6 L1038.1 302.2 L1038.6 308.1 L1039.2 312.1 L1039.7 311.0 L1040.3 304.4 L1040.9 302.9 L1041.4 303.8 L1042.0 306.3 L1042.5 302.5 L1043.1 304.8 L1043.6 299.0 L1044.2 296.4 L1044.7 296.9 L1045.3 296.4 L1045.8 294.4 L1046.4 297.3 L1046.9 299.4 L1047.5 296.7 L1048.0 297.9 L1048.6 293.6 L1049.1 291.7 L1049.7 288.3 L1050.2 290.5 L1050.8 292.2 L1051.3 288.3 L1051.9 287.0 L1052.4 287.5 L1053.0 281.8 L1053.5 285.1 L1054.1 284.7 L1054.7 285.6 L1055.2 287.4 L1055.8 287.1 L1056.3 282.9 L1056.9 282.0 L1057.4 276.0 L1058.0 277.0 L1058.5 278.7 L1059.1 281.7 L1059.6 276.3 L1060.2 274.2 L1060.7 272.5 L1061.3 270.8 L1061.8 272.4 L1062.4 275.0 L1062.9 277.0 L1063.5 277.8 L1064.0 272.5 L1064.6 270.6 L1065.1 268.3 L1065.7 264.2 L1066.2 264.0 L1066.8 268.8 L1067.3 266.8 L1067.9 265.5 L1068.4 265.6 L1069.0 265.2 L1069.5 265.9 L1070.0 268.1 L1070.5 268.4 L1071.0 267.6 L1071.5 270.9 L1072.0 277.9 L1072.5 284.8 L1073.0 291.8 L1073.5 298.8 L1074.0 305.7 L1074.5 312.7 L1075.0 319.7 L1075.5 326.6 L1076.0 333.6 L1076.5 340.6 L1077.0 347.5 L1077.5 354.5 L1078.0 361.5 L1078.5 368.4 L1079.0 375.4 L1079.5 382.4 L1080.0 389.3 L1080.5 396.3 L1081.0 403.3 L1081.5 410.2 L1082.0 417.2 L1082.5 424.2 L1083.0 431.1 L1083.5 438.1 L1084.0 443.3 L1084.5 443.7 L1085.0 445.3 L1085.5 443.2 L1086.0 445.4 L1086.5 450.4 L1087.0 451.3 L1087.5 452.1 L1088.0 454.0 L1088.5 457.6 L1089.0 460.2 L1089.5 460.7 L1090.0 460.7 L1090.5 465.1 L1091.0 465.0 L1091.5 468.4 L1092.0 470.7 L1092.0 462.8 L1092.6 463.4 L1093.1 469.2 L1093.7 468.2 L1094.2 460.5 L1094.8 465.6 L1095.3 458.0 L1095.9 465.8 L1096.4 457.7 L1097.0 457.0 L1097.5 459.0 L1098.1 460.3 L1098.6 463.4 L1099.2 460.6 L1099.7 460.0 L1100.3 456.0 L1100.8 459.5 L1101.4 455.2 L1101.9 460.4 L1102.5 460.3 L1103.0 466.0 L1103.6 463.3 L1104.1 453.3 L1104.7 453.4 L1105.2 452.1 L1105.8 452.7 L1106.3 455.6 L1106.9 455.4 L1107.4 450.0 L1108.0 449.9 L1108.5 444.7 L1109.1 447.5 L1109.6 449.5 L1110.2 450.1 L1110.7 450.6 L1111.3 450.6 L1111.8 448.9 L1112.4 442.9 L1112.9 442.2 L1113.5 444.3 L1114.0 441.6 L1114.6 442.5 L1115.1 441.9 L1115.7 441.9 L1116.2 440.3 L1116.8 438.7 L1117.3 437.5 L1117.9 439.8 L1118.4 440.5 L1119.0 443.5 L1119.5 438.4 L1120.1 434.3 L1120.6 431.2 L1121.2 433.8 L1121.7 431.7 L1122.3 432.9 L1122.8 433.4 L1123.4 431.5 L1123.9 430.8 L1124.5 427.8 L1125.1 429.1 L1125.6 431.6 L1126.2 431.5 L1126.7 433.8 L1127.3 430.3 L1127.8 429.9 L1128.4 424.2 L1128.9 424.1 L1129.5 422.5 L1130.0 422.4 L1130.6 425.7 L1131.1 426.2 L1131.7 424.7 L1132.2 420.0 L1132.8 421.9 L1133.3 417.3 L1133.9 425.4 L1134.4 422.8 L1135.0 420.6 L1135.5 418.5 L1136.1 418.9 L1136.6 415.4 L1137.2 409.7 L1137.7 413.2 L1138.3 411.5 L1138.8 413.9 L1139.4 416.2 L1139.9 412.2 L1140.5 413.8 L1141.0 407.9 L1141.6 410.1 L1142.1 411.1 L1142.7 412.0 L1143.2 413.4 L1143.8 411.1 L1144.3 407.8 L1144.9 401.0 L1145.4 399.7 L1146.0 404.8 L1146.5 402.8 L1147.1 408.2 L1147.6 409.1 L1148.2 404.4 L1148.7 403.9 L1149.3 401.2 L1149.8 399.3 L1150.4 403.1 L1150.9 401.0 L1151.5 398.9 L1152.0 395.7 L1152.6 396.6 L1153.1 393.1 L1153.7 391.3 L1154.2 392.4 L1154.8 397.5 L1155.3 395.3 L1155.9 395.7 L1156.4 394.2 L1157.0 397.3 L1157.6 390.4 L1158.1 388.9 L1158.7 391.9 L1159.2 391.9 L1159.8 389.8 L1160.3 387.8 L1160.9 384.9 L1161.4 381.8 L1162.0 382.6 L1162.5 385.6 L1163.1 387.8 L1163.6 386.8 L1164.2 388.2 L1164.7 383.5 L1165.3 382.1 L1165.8 378.1 L1166.4 379.6 L1166.9 382.0 L1167.5 385.6 L1168.0 380.7 L1168.6 376.2 L1169.1 373.9 L1169.7 374.6 L1170.2 374.3 L1170.8 376.3 L1171.3 378.4 L1171.9 378.7 L1172.4 374.2 L1173.0 370.2 L1173.5 369.8 L1174.1 369.6 L1174.6 371.0 L1175.2 373.5 L1175.7 369.1 L1176.3 368.0 L1176.8 365.6 L1177.4 363.3 L1177.9 366.6 L1178.5 366.2 L1179.0 368.9 L1179.6 367.0 L1180.1 367.0 L1180.7 363.5 L1181.2 361.7 L1181.8 358.3 L1182.3 359.2 L1182.9 358.6 L1183.4 361.9 L1184.0 361.5 L1184.5 357.3 L1185.1 356.6 L1185.6 355.8 L1186.2 362.1 L1186.7 358.6 L1187.3 361.2 L1187.8 356.8 L1188.4 354.9 L1188.9 350.9 L1189.5 351.2 L1190.0 354.1 L1190.5 357.3 L1191.0 354.4 L1191.5 355.5 L1192.0 358.6 L1192.5 365.5 L1193.0 372.4 L1193.5 379.2 L1194.0 386.1 L1194.5 393.0 L1195.0 399.8 L1195.5 406.7 L1196.0 413.6 L1196.5 420.4 L1197.0 427.3 L1197.5 434.2 L1198.0 441.1 L1198.5 447.9 L1199.0 454.8 L1199.5 461.7 L1200.0 468.5 L1200.5 475.4 L1201.0 482.3 L1201.5 489.2 L1202.0 496.0 L1202.5 502.9 L1203.0 509.8 L1203.5 516.6 L1204.0 523.5 L1204.5 530.4 L1205.0 535.0 L1205.5 536.1 L1206.0 535.2 L1206.5 539.7 L1207.0 540.4 L1207.5 539.9 L1208.0 543.9 L1208.5 547.4 L1209.0 546.5 L1209.5 549.5 L1210.0 553.0 L1210.5 552.2 L1211.0 554.7 L1211.5 558.9 L1212.0 559.5 L1212.5 562.3 L1213.0 564.6 L1213.5 563.4 L1213.5 557.8 L1214.1 560.7 L1214.6 558.8 L1215.2 558.5 L1215.7 557.3 L1216.3 558.1 L1216.8 554.8 L1217.4 562.0 L1217.9 554.1 L1218.5 556.7 L1219.0 558.9 L1219.6 560.6 L1220.1 556.8 L1220.7 556.5 L1221.2 557.7 L1221.8 556.6 L1222.3 557.4 L1222.9 555.9 L1223.4 552.5 L1224.0 550.2 L1224.6 552.5 L1225.1 550.3 L1225.7 554.0 L1226.2 556.6 L1226.8 554.8 L1227.3 557.6 L1227.9 553.9 L1228.4 550.2 L1229.0 549.8 L1229.5 546.3 L1230.1 547.0 L1230.6 549.1 L1231.2 550.3 L1231.7 548.6 L1232.3 547.9 L1232.8 546.1 L1233.4 546.0 L1233.9 548.9 L1234.5 547.7 L1235.1 550.4 L1235.6 546.8 L1236.2 544.8 L1236.7 540.3 L1237.3 541.1 L1237.8 541.1 L1238.4 539.7 L1238.9 540.5 L1239.5 544.1 L1240.0 539.4 L1240.6 537.9 L1241.1 538.9 L1241.7 538.3 L1242.2 541.4 L1242.8 542.2 L1243.3 542.1 L1243.9 537.5 L1244.4 534.8 L1245.0 532.0 L1245.6 532.2 L1246.1 532.4 L1246.7 536.0 L1247.2 536.6 L1247.8 536.2 L1248.3 531.9 L1248.9 526.0 L1249.4 531.8 L1250.0 533.4 L1250.5 534.5 L1251.1 533.7 L1251.6 534.8 L1252.2 529.5 L1252.7 526.1 L1253.3 523.9 L1253.8 523.9 L1254.4 529.9 L1254.9 526.7 L1255.5 527.5 L1256.1 526.8 L1256.6 526.0 L1257.2 522.2 L1257.7 523.9 L1258.3 525.2 L1258.8 525.0 L1259.4 524.7 L1259.9 522.5 L1260.5 521.5 L1261.0 520.2 L1261.6 517.4 L1262.1 518.2 L1262.7 520.8 L1263.2 520.6 L1263.8 519.6 L1264.3 519.9 L1264.9 518.2 L1265.4 514.6 L1266.0 516.2 L1266.6 515.7 L1267.1 519.4 L1267.7 516.3 L1268.2 514.0 L1268.8 511.4 L1269.3 512.4 L1269.9 511.2 L1270.4 511.5 L1271.0 515.7 L1271.5 515.9 L1272.1 515.5 L1272.6 514.1 L1273.2 511.3 L1273.7 507.4 L1274.3 509.7 L1274.8 508.2 L1275.4 512.2 L1275.9 510.4 L1276.5 508.3 L1277.1 504.0 L1277.6 504.1 L1278.2 502.6 L1278.7 505.7 L1279.3 506.1 L1279.8 509.8 L1280.4 508.7 L1280.9 503.2 L1281.5 500.8 L1282.0 502.5 L1282.6 502.0 L1283.1 503.3 L1283.7 503.1 L1284.2 502.5 L1284.8 497.0 L1285.3 498.2 L1285.9 496.5 L1286.4 502.7 L1287.0 501.7 L1287.6 501.2 L1288.1 500.2 L1288.7 499.1 L1289.2 495.3 L1289.8 491.3 L1290.3 494.8 L1290.9 495.1 L1291.4 494.6 L1292.0 493.3 L1292.5 492.7 L1293.1 490.6 L1293.6 488.0 L1294.2 489.0 L1294.7 493.0 L1295.3 492.5 L1295.8 495.9 L1296.4 493.4 L1296.9 492.1 L1297.5 484.6 L1298.1 483.1 L1298.6 485.1 L1299.2 487.1 L1299.7 489.4 L1300.3 488.3 L1300.8 484.1 L1301.4 482.7 L1301.9 482.8 L1302.5 482.2 L1303.0 484.1 L1303.6 487.2 L1304.1 491.4 L1304.7 481.1 L1305.2 480.6 L1305.8 479.6 L1306.3 481.5 L1306.9 475.4 L1307.4 478.3" fill="none" stroke="#2a4592" stroke-width="1.250" stroke-linejoin="round"/>
</svg>
<!-- y labels left -->
<div class="yl" style="top:115px">97.84</div>
<div class="yl" style="top:134px;width:39px">mV</div>
<div class="yl" style="top:170px">95.74</div>
<div class="yl" style="top:225px">93.63</div>
<div class="yl" style="top:281px">91.53</div>
<div class="yl" style="top:336px">89.42</div>
<div class="yl" style="top:392px">87.32</div>
<div class="yl" style="top:447px">85.21</div>
<div class="yl" style="top:503px">83.11</div>
<div class="yl" style="top:558px">81.0</div>
<div class="yl" style="top:613px">78.9</div>
<div class="yl" style="top:669px">76.79</div>
<!-- y labels right -->
<div class="yr" style="top:115px">127.5</div>
<div class="yr" style="top:134px">kHz</div>
<div class="yr" style="top:170px">127.1</div>
<div class="yr" style="top:225px">126.7</div>
<div class="yr" style="top:281px">126.3</div>
<div class="yr" style="top:336px">125.8</div>
<div class="yr" style="top:392px">125.4</div>
<div class="yr" style="top:447px">125.0</div>
<div class="yr" style="top:503px">124.6</div>
<div class="yr" style="top:558px">124.2</div>
<div class="yr" style="top:613px">123.7</div>
<div class="yr" style="top:669px">123.3</div>
<!-- x labels -->
<div class="xl" style="left:11px">31.51</div>
<div class="xl" style="left:138px">32.55</div>
<div class="xl" style="left:264px">33.6</div>
<div class="xl" style="left:391px">34.64</div>
<div class="xl" style="left:518px">35.69</div>
<div class="xl" style="left:645px">36.73</div>
<div class="xl" style="left:772px">37.78</div>
<div class="xl" style="left:899px">38.82</div>
<div class="xl" style="left:1025px">39.87</div>
<div class="xl" style="left:1152px">40.91</div>
<div class="xl" style="left:1279px">41.95</div>
<!-- markers -->
<div class="abs" style="left:3px;top:119.500px;width:7px;height:6px;background:#2e4aa0;border:1px solid #0c1440;box-sizing:content-box"></div>
<div class="abs" style="left:1340px;top:119px;width:7px;height:9px;background:#000"></div>
<div class="abs" style="left:37px;top:672px;width:7px;height:7px;border:1px solid #000;background:#fff;box-sizing:content-box"></div>
<div class="abs" style="left:38px;top:674.300px;width:5px;height:5px;background:#e4e400;transform:rotate(45deg)"></div>
<div class="abs" style="left:1304px;top:670.500px;width:9px;height:9px;border-radius:50%;background:#1f8088;border:1px solid #0b3f45;box-sizing:content-box"></div>
<div class="abs" style="left:5px;top:702px;width:35px;height:13px;background:#7072c0;color:#eeeefa;font-size:10px;text-align:center;line-height:13px">x1.0</div>
<div class="abs" style="left:43px;top:701px;font-size:12px">µs</div>
<div class="abs" style="left:1311px;top:702px;width:34px;height:13px;background:#7f7f7f;color:#dedede;font-size:10px;text-align:center;line-height:13px">x1.0</div>

<!-- zoom overview -->
<div class="abs" style="left:41px;top:124px;width:445px;height:236px;border:1px solid #a2a2a2;background:#fff;box-sizing:content-box"></div>
<div class="abs" style="left:43px;top:126px;width:441px;height:232px;border:1px solid #a8a8a8;background:#fff;box-sizing:content-box"></div>
<div class="abs" style="left:43px;top:126px;width:443px;height:17px;background:#999"></div>
<div class="abs" style="left:45px;top:128.200px;font-size:12px;font-weight:bold;color:#fff;white-space:nowrap;letter-spacing:-.1px">Zoom Overview</div>
<svg class="abs" style="left:0;top:0" width="500" height="370" viewBox="0 0 500 370">
<rect x="457" y="136" width="7" height="2.6" fill="#fff"/>
<path d="M473.2 129.5L482.8 138.8M482.8 129.5L473.2 138.8" stroke="#fff" stroke-width="1.9" fill="none"/>
<g stroke="#c3d1d7" stroke-width="1" stroke-dasharray="3 3" fill="none" shape-rendering="crispEdges">
<path d="M53 153.5H476M53 173.5H476M53 193.5H476M53 213.5H476M53 233.5H476M53 254.5H476M53 274.5H476M53 294.5H476M53 314.5H476M53 334.5H476M53 354.5H476"/>
<path d="M53.5 153V355M95.5 153V355M138.5 153V355M180.5 153V355M222.5 153V355M264.5 153V355M306.5 153V355M349.5 153V355M391.5 153V355M433.5 153V355M475.5 153V355"/>
</g>
<path d="M53.6 334.4 L54.4 340.0 L55.1 337.1 L55.9 342.5 L56.6 339.7 L57.4 346.0 L58.1 341.2 L58.9 346.3 L59.6 341.8 L60.4 346.7 L61.1 341.8 L61.9 347.7 L62.6 342.3 L63.4 347.8 L64.1 340.2 L64.8 345.2 L65.6 337.9 L66.3 342.5 L67.1 335.7 L67.8 339.2 L68.6 332.9 L69.3 335.5 L70.1 330.2 L70.8 331.0 L71.6 324.9 L72.3 325.6 L73.1 320.1 L73.8 319.8 L74.6 315.0 L75.3 314.1 L76.1 308.7 L76.8 307.8 L77.6 302.2 L78.3 300.8 L79.1 295.0 L79.8 293.2 L80.6 287.7 L81.3 285.6 L82.1 280.0 L82.8 277.9 L83.6 272.2 L84.3 270.2 L85.1 264.3 L85.8 261.9 L86.6 256.2 L87.3 253.6 L88.1 247.8 L88.8 245.5 L89.6 240.0 L90.3 237.7 L91.1 231.7 L91.8 229.5 L92.6 224.0 L93.3 221.6 L94.1 216.1 L94.8 214.1 L95.6 209.1 L96.3 207.3 L97.1 201.9 L97.8 200.8 L98.6 195.4 L99.3 194.1 L100.1 189.2 L100.8 188.9 L101.6 183.4 L102.3 184.0 L103.1 177.7 L103.8 178.8 L104.6 173.5 L105.3 174.7 L106.1 169.3 L106.8 172.5 L107.6 166.3 L108.3 169.9 L109.1 163.5 L109.8 168.8 L110.6 160.6 L111.3 167.4 L112.1 161.1 L112.8 166.3 L113.6 159.9 L114.3 166.2 L115.1 160.7 L115.8 167.1 L116.6 162.9 L117.3 167.3 L118.1 164.2 L118.8 170.1 L119.6 167.8 L120.3 172.3 L121.1 170.6 L121.8 176.1 L122.6 174.9 L123.3 179.7 L124.1 180.0 L124.8 184.3 L125.6 185.2 L126.3 189.7 L127.1 191.4 L127.8 195.5 L128.6 197.7 L129.3 201.9 L130.1 204.4 L130.8 208.5 L131.6 211.4 L132.3 215.8 L133.1 219.0 L133.8 223.2 L134.6 226.6 L135.3 231.0 L136.1 234.5 L136.8 239.0 L137.6 242.5 L138.3 247.2 L139.1 250.6 L139.8 255.3 L140.6 258.9 L141.3 263.4 L142.1 266.9 L142.8 271.5 L143.6 275.0 L144.3 279.4 L145.1 282.9 L145.8 287.3 L146.6 290.3 L147.3 294.7 L148.1 297.7 L148.8 301.9 L149.6 304.5 L150.3 308.7 L151.1 310.9 L151.8 315.3 L152.6 316.8 L153.3 321.2 L154.1 322.3 L154.8 326.8 L155.6 326.8 L156.3 331.5 L157.1 331.4 L157.8 336.1 L158.6 334.3 L159.3 339.3 L160.1 338.2 L160.8 342.9 L161.6 340.4 L162.3 345.9 L163.1 341.8 L163.8 346.7 L164.6 341.8 L165.3 347.4 L166.1 341.9 L166.8 348.9 L167.6 341.3 L168.3 347.2 L169.1 341.4 L169.8 345.4 L170.6 338.9 L171.3 342.8 L172.1 336.8 L172.8 340.2 L173.6 332.8 L174.3 335.7 L175.1 330.1 L175.8 331.2 L176.6 325.2 L177.3 325.8 L178.1 320.1 L178.8 320.4 L179.6 314.9 L180.3 314.1 L181.1 309.2 L181.8 307.9 L182.6 302.6 L183.3 300.7 L184.1 295.2 L184.8 293.4 L185.6 288.3 L186.3 285.8 L187.1 280.5 L187.8 278.4 L188.6 272.6 L189.3 270.3 L190.1 264.3 L190.8 261.9 L191.6 256.4 L192.3 254.0 L193.1 248.1 L193.8 245.7 L194.6 240.0 L195.3 237.8 L196.1 232.1 L196.8 230.0 L197.6 224.0 L198.3 222.1 L199.1 216.8 L199.8 214.7 L200.6 209.5 L201.3 207.3 L202.1 202.0 L202.8 200.5 L203.6 195.3 L204.3 194.2 L205.1 189.1 L205.8 189.2 L206.6 183.3 L207.3 184.1 L208.1 178.6 L208.8 179.7 L209.6 173.1 L210.3 175.2 L211.1 169.0 L211.8 171.6 L212.6 165.6 L213.3 170.0 L214.1 164.2 L214.8 167.7 L215.6 161.6 L216.3 167.4 L217.1 160.0 L217.8 166.6 L218.6 160.4 L219.3 165.7 L220.1 160.8 L220.8 166.4 L221.6 162.6 L222.3 167.5 L223.1 164.9 L223.8 170.0 L224.6 167.0 L225.3 172.3 L226.1 171.3 L226.8 175.9 L227.6 174.8 L228.3 179.5 L229.1 179.6 L229.8 184.2 L230.6 185.0 L231.3 189.5 L232.1 191.2 L232.8 195.2 L233.6 197.5 L234.3 201.7 L235.1 204.0 L235.8 208.4 L236.6 211.2 L237.3 215.5 L238.1 218.7 L238.8 223.0 L239.6 226.3 L240.3 230.9 L241.1 234.3 L241.8 238.7 L242.6 242.2 L243.3 246.9 L244.1 250.4 L244.8 255.1 L245.6 258.6 L246.3 263.2 L247.1 266.7 L247.8 271.2 L248.6 274.8 L249.3 279.2 L250.1 282.5 L250.8 286.8 L251.6 290.1 L252.3 294.5 L253.1 297.5 L253.8 301.7 L254.6 304.4 L255.3 308.5 L256.1 310.7 L256.9 315.1 L257.6 316.8 L258.4 321.0 L259.1 322.2 L259.9 326.7 L260.6 326.7 L261.4 331.1 L262.1 331.4 L262.9 335.8 L263.6 334.3 L264.4 339.2 L265.1 337.1 L265.9 343.4 L266.6 339.8 L267.4 345.2 L268.1 340.6 L268.9 347.0 L269.6 341.5 L270.4 347.9 L271.1 341.8 L271.9 348.4 L272.6 340.8 L273.4 346.4 L274.1 340.2 L274.9 346.0 L275.6 338.0 L276.4 343.3 L277.1 336.6 L277.9 340.3 L278.6 333.4 L279.4 335.3 L280.1 329.9 L280.9 331.2 L281.6 325.4 L282.4 326.5 L283.1 320.4 L283.9 320.2 L284.6 315.2 L285.4 314.7 L286.1 309.4 L286.9 308.1 L287.6 302.6 L288.4 300.9 L289.1 295.4 L289.9 293.6 L290.6 288.6 L291.4 286.2 L292.1 280.7 L292.9 278.7 L293.6 272.6 L294.4 270.6 L295.1 265.0 L295.9 262.4 L296.6 256.6 L297.4 254.2 L298.1 248.7 L298.9 246.0 L299.6 240.4 L300.4 238.2 L301.1 232.2 L301.9 230.3 L302.6 224.7 L303.4 222.1 L304.1 216.8 L304.9 214.9 L305.6 209.6 L306.4 207.7 L307.1 202.1 L307.9 201.0 L308.6 195.5 L309.4 194.5 L310.1 189.9 L310.9 189.2 L311.6 184.1 L312.4 184.1 L313.1 178.3 L313.9 179.8 L314.6 173.7 L315.4 175.9 L316.1 169.4 L316.9 172.6 L317.6 166.2 L318.4 170.2 L319.1 163.3 L319.9 167.4 L320.6 162.1 L321.4 166.7 L322.1 159.6 L322.9 165.5 L323.6 160.1 L324.4 166.0 L325.1 160.7 L325.9 167.1 L326.6 162.1 L327.4 167.0 L328.1 164.3 L328.9 169.9 L329.6 167.6 L330.4 172.0 L331.1 170.3 L331.9 176.0 L332.6 175.2 L333.4 179.3 L334.1 179.8 L334.9 184.0 L335.6 185.0 L336.4 189.3 L337.1 190.9 L337.9 194.9 L338.6 197.3 L339.4 201.2 L340.1 203.9 L340.9 208.2 L341.6 211.1 L342.4 215.2 L343.1 218.3 L343.9 222.8 L344.6 226.1 L345.4 230.5 L346.1 233.9 L346.9 238.5 L347.6 242.1 L348.4 246.5 L349.1 250.2 L349.9 254.8 L350.6 258.3 L351.4 262.8 L352.1 266.3 L352.9 271.0 L353.6 274.5 L354.4 278.9 L355.1 282.3 L355.9 286.6 L356.6 290.0 L357.4 294.3 L358.1 297.1 L358.9 301.3 L359.6 304.2 L360.4 308.2 L361.1 310.7 L361.9 314.9 L362.6 316.5 L363.4 320.8 L364.1 321.9 L364.9 326.5 L365.6 326.6 L366.4 331.2 L367.1 330.7 L367.9 335.3 L368.6 334.5 L369.4 339.4 L370.1 337.4 L370.9 342.5 L371.6 339.2 L372.4 344.3 L373.1 340.8 L373.9 346.2 L374.6 342.5 L375.4 346.7 L376.1 342.6 L376.9 347.0 L377.6 340.9 L378.4 346.9 L379.1 340.9 L379.9 344.6 L380.6 339.6 L381.4 342.9 L382.1 337.1 L382.9 339.1 L383.6 333.4 L384.4 335.6 L385.1 329.5 L385.9 332.0 L386.6 325.8 L387.4 326.7 L388.1 320.8 L388.9 320.9 L389.6 315.7 L390.4 314.9 L391.1 309.2 L391.9 308.3 L392.6 302.9 L393.4 301.0 L394.1 295.7 L394.9 294.1 L395.6 288.5 L396.4 286.3 L397.1 280.7 L397.9 278.6 L398.6 273.1 L399.4 270.6 L400.1 264.8 L400.9 262.4 L401.6 256.7 L402.4 254.6 L403.1 248.7 L403.9 246.4 L404.6 240.5 L405.4 238.1 L406.1 232.8 L406.9 230.1 L407.6 224.8 L408.4 222.3 L409.1 217.0 L409.9 215.1 L410.6 210.0 L411.4 207.7 L412.1 202.6 L412.9 201.4 L413.6 195.9 L414.4 195.0 L415.1 189.4 L415.9 189.6 L416.6 183.9 L417.4 184.6 L418.1 178.9 L418.9 179.5 L419.6 173.6 L420.4 175.3 L421.1 169.0 L421.9 173.1 L422.6 165.7 L423.4 169.9 L424.1 163.8 L424.9 167.5 L425.6 161.7 L426.4 167.3 L427.1 161.1 L427.9 165.6 L428.6 160.7 L429.4 165.3 L430.1 160.7 L430.9 166.8 L431.6 162.8 L432.4 167.0 L433.1 163.8 L433.9 169.8 L434.6 167.3 L435.4 171.9 L436.1 171.0 L436.9 175.4 L437.6 174.4 L438.4 179.0 L439.1 179.7 L439.9 183.7 L440.6 184.8 L441.4 188.9 L442.1 190.8 L442.9 194.8 L443.6 196.8 L444.4 201.2 L445.1 203.7 L445.9 207.9 L446.6 210.8 L447.4 215.0 L448.1 218.1 L448.9 222.5 L449.6 225.9 L450.4 230.3 L451.1 233.6 L451.9 238.3 L452.6 241.8 L453.4 246.4 L454.1 249.8 L454.9 254.4 L455.6 258.0 L456.4 262.7 L457.1 266.1 L457.9 270.8 L458.6 274.2 L459.4 278.7 L460.1 282.1 L460.9 286.3 L461.6 289.7 L462.4 293.9 L463.1 297.0 L463.9 301.1 L464.6 303.9 L465.4 308.1 L466.1 310.5 L466.9 314.6 L467.6 316.4 L468.4 320.6 L469.1 321.8 L469.9 326.4 L470.6 326.4 L471.4 331.2 L472.1 331.3 L472.9 335.4 L473.6 334.7 L474.4 339.4" fill="none" stroke="#2a489a" stroke-width="1.250" stroke-linejoin="round"/>
<rect x="204.5" y="156.5" width="22" height="21" fill="none" stroke="#8a8a8a" stroke-width="1"/>
<rect x="135" y="243" width="4" height="4" fill="#e8e020" stroke="#9a8a10" stroke-width=".6" transform="rotate(45 137 245)"/>
</svg>

<!-- scrollbars -->
<div class="abs" style="left:1346px;top:112px;width:17px;height:605px;background:linear-gradient(90deg,#f7f5f0,#ebe6db)"></div>
<div class="abs sb" style="left:1347px;top:112px;width:14px;height:13px"></div>
<div class="abs sb" style="left:1347px;top:135px;width:14px;height:56px"></div>
<div class="abs sb" style="left:1347px;top:701px;width:14px;height:13px"></div>
<div class="abs" style="left:3px;top:717px;width:1343px;height:16px;background:linear-gradient(#e6dfd2,#f6f3ed)"></div>
<div class="abs sb" style="left:3px;top:717px;width:15px;height:13px"></div>
<div class="abs sb" style="left:1330px;top:717px;width:15px;height:13px"></div>
<div class="abs sb" style="left:489px;top:717px;width:64px;height:13px"></div>
<svg class="abs" style="left:0;top:0;pointer-events:none" width="1366" height="768" viewBox="0 0 1366 768">
<g stroke="#5a5048" stroke-width="1.3" fill="none">
<path d="M1350.500 122L1355 117.500L1359.500 122"/>
<path d="M1350.500 706.500L1355 711L1359.500 706.500"/>
<path d="M13.500 720L9 724.500L13.500 729"/>
<path d="M1336 720L1340.500 724.500L1336 729"/>
</g>
<g stroke="#857a6e" stroke-width="1" fill="none" shape-rendering="crispEdges">
<path d="M1351 161.500H1358M1351 163.500H1358M1351 165.500H1358"/>
<path d="M519.500 721V729M521.500 721V729M523.500 721V729"/>
</g>
</svg>

<!-- bottom toolbar -->
<div id="bt" class="abs"></div>
<div id="btm" class="abs"></div>
<div class="abs" style="left:0;top:735px;width:1366px;height:33px">
<span class="bl2" style="left:10px">Stopped</span>
<div class="abs selb" style="left:88px;top:3px;width:24px;height:24px"></div>
<div class="sep" style="left:116px;top:3px;height:26px"></div>
<div class="sep" style="left:275px;top:3px;height:26px"></div>
<div class="sep" style="left:331px;top:3px;height:26px"></div>
<div class="sep" style="left:389px;top:3px;height:26px"></div>
<div class="sep" style="left:510px;top:3px;height:26px"></div>
<div class="sep" style="left:772px;top:3px;height:26px"></div>
<div class="sep" style="left:941px;top:3px;height:26px"></div>
<span class="bl2" style="left:122px">Trigger</span>
<div class="dd" style="left:170px;top:3px;width:73px"><span class="txt" style="left:3px;letter-spacing:-.2px">Single</span><i class="tri-d" style="left:56px;top:10px"></i></div>
<div class="dd" style="left:283px;top:3px;width:42px"><span class="txt" style="left:3.500px">A</span><i class="tri-d" style="left:25px;top:10px"></i></div>
<div class="abs" style="left:361px;top:3px;width:25px;height:25px;background:#dfe7ec"></div>
<div class="spin" style="left:397px;top:3px;width:107px"><div class="b l" style="width:24px"><i class="tri-l" style="left:8px;top:7px"></i></div><div class="b r" style="width:24px"><i class="tri-r" style="left:10px;top:7px"></i></div><span class="txt" style="left:29px;color:#111">9 mV</span></div>
<div class="spin" style="left:518px;top:3px;width:107px"><div class="b l" style="width:24px"><i class="tri-l" style="left:8px;top:7px"></i></div><div class="b r" style="width:24px"><i class="tri-r" style="left:10px;top:7px"></i></div><span class="txt" style="left:29px;color:#111;letter-spacing:-.5px">20 %</span></div>
<div class="spin disab" style="left:659px;top:3px;width:107px"><div class="b l dis" style="width:24px"><i class="tri-l d" style="left:8px;top:7px"></i></div><div class="b r dis" style="width:24px"><i class="tri-r d" style="left:10px;top:7px"></i></div><span class="txt" style="left:32px;color:#c2c2c2">0 s</span></div>
<span class="bl2" style="left:780px">Measurements</span>
<span class="bl2" style="left:949px;letter-spacing:-.4px">Rulers</span>
<span class="bl2" style="left:1014px">Notes</span>
</div>
<svg class="abs" style="left:0;top:735px;pointer-events:none" width="1366" height="33" viewBox="0 735 1366 33">
<defs>
<linearGradient id="gr" x1="0" x2="0" y1="0" y2="1"><stop offset="0" stop-color="#74c474"/><stop offset=".5" stop-color="#2f9a45"/><stop offset="1" stop-color="#1c6e2c"/></linearGradient>
<g id="gbtn"><rect x=".5" y=".5" width="14" height="14" rx="1.500" fill="url(#gr)" stroke="#1a4a22" stroke-width="1"/><rect x="1.500" y="1.500" width="12" height="12" rx="1" fill="none" stroke="#a8e0a8" stroke-width=".6" opacity=".7"/></g>
</defs>
<!-- play / stop -->
<path d="M72 745.300V756.700L79.300 751Z" fill="#2e8a4a"/>
<rect x="95.500" y="745.500" width="10.300" height="10.300" fill="#e8222c" stroke="#f6d8d8" stroke-width=".8"/>
<!-- trigger icon -->
<rect x="256.500" y="749" width="5" height="7.500" fill="#a8cde8"/>
<path d="M252 756.500H256V748H262V756.500H268" fill="none" stroke="#000" stroke-width="1.300"/>
<path d="M261.500 743.300H268.300V750Z" fill="#000"/>
<circle cx="259" cy="754" r="1.100" fill="#3a9a5a"/>
<!-- disabled edge icons -->
<g stroke="#bcb8b0" stroke-width=".9" fill="none">
<path d="M341 756.300C347 756.300 348 746.200 355 746.200M347.800 746.500V756.500M346.300 748.800L347.800 747L349.300 748.800M346.300 754.200L347.800 756L349.300 754.200"/>
<path d="M367 746.200C373 746.200 374 756.300 381 756.300M374.200 746.500V756.500M372.700 748.800L374.200 747L375.700 748.800M372.700 754.200L374.200 756L375.700 754.200"/>
</g>
<!-- delay icon -->
<path d="M634.500 752.500C636.500 748.500 639 748.500 641.500 752.500S646.500 759.500 650 755" fill="none" stroke="#111" stroke-width="1.200"/>
<path d="M636 746.500H648" stroke="#2b3f9c" stroke-width="1.300"/>
<path d="M646 744L649.500 746.500L646 749Z" fill="#2b3f9c"/>
<path d="M636.500 744.500V749" stroke="#111" stroke-width="1"/>
<rect x="645.500" y="749.300" width="3.400" height="3.400" fill="#f0e040" stroke="#3a3a10" stroke-width=".7" transform="rotate(45 647.200 751)"/>
<!-- green buttons -->
<use href="#gbtn" x="867" y="743"/>
<path d="M874.500 746.500V754.500M870.500 750.500H878.500" stroke="#fff" stroke-width="2.200"/>
<g opacity=".38"><use href="#gbtn" x="893" y="743"/><path d="M896.500 750.500H904.500" stroke="#fff" stroke-width="2.200"/></g>
<g opacity=".38"><use href="#gbtn" x="919" y="743"/><path d="M922 754L926.500 748L931 754Z" fill="#fff"/></g>
<use href="#gbtn" x="990" y="743"/><path d="M993 754L997.500 748L1002 754Z" fill="#fff"/>
<use href="#gbtn" x="1052" y="743"/><path d="M1055 754L1059.500 748L1064 754Z" fill="#fff"/>
<!-- resize grip -->
<path d="M1358 760.500V770H1367.500Z" fill="#fff" stroke="#000" stroke-width="1.200"/>
</svg>

</body>
</html>
